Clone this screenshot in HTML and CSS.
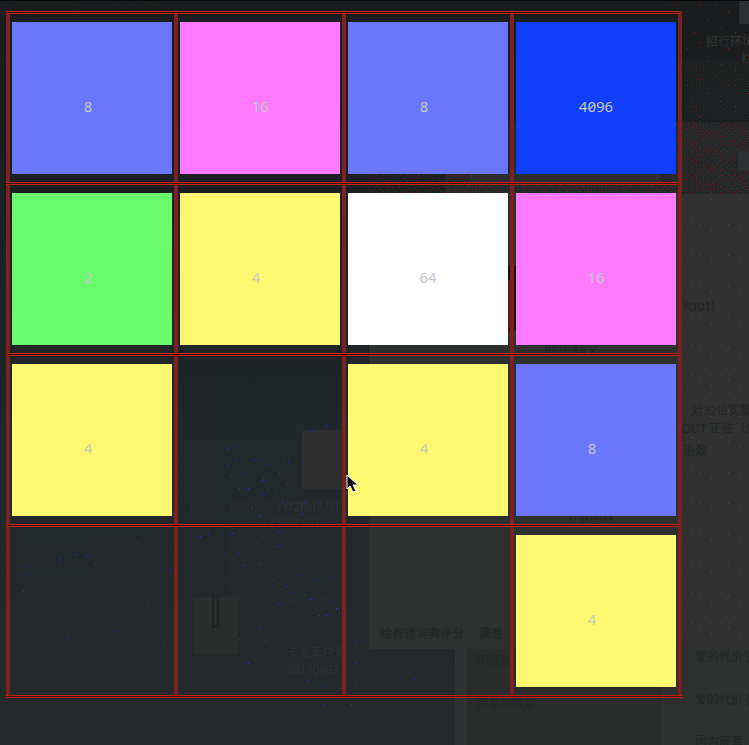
FILE: index.html
```
<!DOCTYPE html>
<html lang="zh-CN">
<head>
<meta charset="utf-8">
<meta name="viewport" content="width=device-width, initial-scale=1">
<title>2048</title>
<link rel="stylesheet" href="styles.css">
</head>
<body>
<svg class="backdrop" aria-hidden="true">
  <defs>
    <linearGradient id="base" x1="0" y1="0" x2="0" y2="745" gradientUnits="userSpaceOnUse">
      <stop offset="0" stop-color="#1b1c1d"/>
      <stop offset=".25" stop-color="#1c2022"/>
      <stop offset=".6" stop-color="#22272a"/>
      <stop offset="1" stop-color="#25292b"/>
    </linearGradient>
    <pattern id="grain" width="7" height="5" patternUnits="userSpaceOnUse">
      <path fill="#303030" d="M0 0h1v1H0zM3 1h1v1H3zM5 3h1v1H5zM1 3h1v1H1zM6 1h1v1H6zM3 4h1v1H3z"/>
    </pattern>
    <pattern id="red" width="23" height="17" patternUnits="userSpaceOnUse">
      <path fill="#741818" d="M1 1h1v1H1zM7 0h1v1H7zM12 2h1v1h-1zM18 1h1v1h-1zM4 4h1v1H4zM9 5h1v1H9zM15 4h1v1h-1zM21 5h1v1h-1zM2 8h1v1H2zM6 7h1v1H6zM13 8h1v1h-1zM19 9h1v1h-1zM4 11h1v1H4zM10 12h1v1h-1zM16 11h1v1h-1zM22 12h1v1h-1zM1 14h1v1H1zM8 15h1v1H8zM14 14h1v1h-1zM20 15h1v1h-1z"/>
    </pattern>
    <pattern id="redSparse" width="41" height="37" patternUnits="userSpaceOnUse">
      <path fill="#891c18" d="M3 5h1v1H3zM18 2h1v1h-1zM31 11h1v1h-1zM10 19h1v1h-1zM24 27h1v1h-1zM38 32h1v1h-1z"/>
    </pattern>
    <pattern id="greySparse" width="29" height="31" patternUnits="userSpaceOnUse">
      <path fill="#4a4c4c" d="M3 7h1v1H3zM15 13h1v1h-1zM25 3h1v1h-1zM9 27h1v1H9z"/>
    </pattern>
  </defs>
  <rect width="1600" height="1200" fill="url(#base)"/>
  <rect width="1600" height="1" fill="#000"/>

  <rect x="445" y="122" width="1155" height="72" fill="#242526"/>
  <rect x="445" y="122" width="1155" height="72" fill="url(#grain)"/>
  <rect x="369" y="174" width="313" height="20" fill="url(#red)"/>
  <rect x="672" y="122" width="928" height="72" fill="url(#red)"/>
  <rect x="672" y="1" width="928" height="121" fill="url(#redSparse)"/>
  <rect x="682" y="60" width="918" height="62" fill="url(#grain)" opacity=".6"/>
  <path fill="#2c2e2f" d="M739 1h30v23h-30zM738 151h30v20h-30z"/>

  <rect x="369" y="194" width="1231" height="455" fill="#2e2f2f"/>
  <rect x="470" y="174" width="190" height="8" fill="#2e2f2f"/>
  <rect x="682" y="194" width="918" height="451" fill="#303030"/>
  <rect x="682" y="194" width="918" height="451" fill="url(#greySparse)"/>
  <rect x="466" y="649" width="195" height="551" fill="#2a2b2b"/>
  <rect x="455" y="649" width="12" height="551" fill="#303131"/>
  <rect x="661" y="649" width="939" height="551" fill="#2e302f"/>
  <rect x="508" y="265" width="8" height="66" fill="#191212"/>
  <path fill="#681818" d="M508 280h3q6 24-3 54z"/>

  <rect x="228" y="500" width="114" height="130" fill="url(#grain)" opacity=".7"/>
  <rect x="98" y="540" width="65" height="60" fill="url(#grain)" opacity=".35"/>
  <rect x="302" y="430" width="42" height="59" rx="3" fill="#2e2d2d"/>
  <rect x="193" y="597" width="45" height="57" fill="#2b2c2c"/>
  <path fill="none" stroke="#202426" stroke-width="2" d="M213 597h5v30h-5z"/>

  <g class="ghost-dark">
    <text x="683" y="311" class="large">root)</text>
    <text x="544" y="354" class="large">网络释义</text>
    <text x="691" y="415">对32位实数</text>
    <text x="682" y="433">OUT 正弦（S</text>
    <text x="683" y="455">函数</text>
    <text x="566" y="521">分散函数</text>
    <text x="380" y="638">给有道词典评分</text>
    <text x="479" y="638">满意</text>
    <text x="476" y="666">小时候</text>
    <text x="476" y="708">简单的歌单</text>
    <text x="695" y="661">爱的代价 (</text>
    <text x="695" y="704">爱的代价 (</text>
    <text x="695" y="746">因为寂寞</text>
  </g>
  <g class="ghost-light">
    <text x="706" y="46">招行环境</text>
    <text x="741" y="63">栏</text>
    <text x="278" y="511">rW2RH8JM</text>
    <text x="270" y="527">FSPHX07</text>
    <text x="286" y="657">卡流库户号</text>
    <text x="286" y="674">20170907</text>
  </g>

  <path fill="#080909" d="M5 7h1v1H5zM13 8h1v1h-1zM22 4h1v1h-1zM36 6h1v1h-1zM54 5h1v1h-1zM72 7h1v1h-1zM105 3h1v1h-1zM119 7h1v1h-1zM131 7h1v1h-1zM144 4h1v1h-1zM156 7h1v1h-1zM26 15h1v1h-1zM35 16h1v1h-1zM76 15h1v1h-1zM94 17h1v1h-1zM124 14h1v1h-1zM1 33h1v1H1zM2 38h1v1H2zM0 45h1v1H0zM2 49h1v1H2zM1 58h1v1H1z"/>
  <path fill="#1539f0" d="M60 558h1v1h-1zM60 561h1v1h-1zM76 554h1v1h-1zM86 556h1v1h-1zM95 564h1v1h-1zM26 565h1v1h-1zM26 573h1v1h-1zM23 591h1v1h-1zM21 603h1v1h-1zM137 543h1v1h-1zM163 541h1v1h-1zM170 570h1v1h-1zM147 603h1v1h-1zM68 638h1v1h-1zM65 644h1v1h-1zM89 629h1v1h-1zM114 631h1v1h-1zM163 644h1v1h-1zM191 506h1v1h-1zM200 536h1v1h-1zM208 533h1v1h-1zM232 533h1v1h-1zM238 553h1v1h-1zM242 565h1v1h-1zM239 639h1v1h-1zM248 663h1v1h-1z
    M228 448h1v1h-1zM234 445h1v1h-1zM236 460h1v1h-1zM228 465h1v1h-1zM254 460h1v1h-1zM258 459h1v1h-1zM266 464h1v1h-1zM283 459h1v1h-1zM288 461h1v1h-1zM231 475h1v1h-1zM242 474h1v1h-1zM263 478h1v1h-1zM262 480h1v1h-1zM279 473h1v1h-1zM287 484h1v1h-1zM293 485h1v1h-1zM293 490h1v1h-1zM239 488h1v1h-1zM248 488h1v1h-1zM262 494h1v1h-1zM267 489h1v1h-1zM275 491h1v1h-1zM303 433h1v1h-1zM312 430h1v1h-1zM326 425h1v1h-1zM231 505h1v1h-1zM245 503h1v1h-1zM251 507h1v1h-1zM269 508h1v1h-1zM282 502h1v1h-1zM295 509h1v1h-1zM304 502h1v1h-1zM302 514h1v1h-1zM260 516h1v1h-1z
    M278 531h1v1h-1zM278 546h1v1h-1zM257 543h1v1h-1zM261 563h1v1h-1zM273 579h1v1h-1zM298 575h1v1h-1zM314 579h1v1h-1zM332 577h1v1h-1zM286 586h1v1h-1zM290 592h1v1h-1zM293 600h1v1h-1zM310 599h1v1h-1zM317 597h1v1h-1zM321 598h1v1h-1zM332 602h1v1h-1zM336 608h1v1h-1zM278 604h1v1h-1zM293 610h1v1h-1zM319 615h1v1h-1zM326 615h1v1h-1zM309 622h1v1h-1zM260 628h1v1h-1zM265 640h1v1h-1zM293 639h1v1h-1zM356 642h1v1h-1zM356 663h1v1h-1zM308 680h1v1h-1zM322 686h1v1h-1zM341 688h1v1h-1zM355 682h1v1h-1zM414 679h1v1h-1zM324 704h1v1h-1zM351 704h1v1h-1zM357 713h1v1h-1z"/>
</svg>

<main class="board">
  <div class="cell"><div class="tile v8 single">8</div></div>
  <div class="cell"><div class="tile v16">16</div></div>
  <div class="cell"><div class="tile v8 single">8</div></div>
  <div class="cell"><div class="tile v4096">4096</div></div>

  <div class="cell"><div class="tile v2 single">2</div></div>
  <div class="cell"><div class="tile v4 single">4</div></div>
  <div class="cell"><div class="tile v64">64</div></div>
  <div class="cell"><div class="tile v16">16</div></div>

  <div class="cell"><div class="tile v4 single">4</div></div>
  <div class="cell"></div>
  <div class="cell"><div class="tile v4 single">4</div></div>
  <div class="cell"><div class="tile v8 single">8</div></div>

  <div class="cell"></div>
  <div class="cell"></div>
  <div class="cell"></div>
  <div class="cell"><div class="tile v4 single">4</div></div>
</main>

<svg class="pointer" width="13" height="20" viewBox="0 0 13 20" aria-hidden="true">
  <path d="M1 1v14l3-3 3 6 3-1-3-6h5z" fill="#000" stroke="#fff" stroke-width="1"/>
</svg>
</body>
</html>
```
FILE: styles.css
```
*,
*::before,
*::after {
  box-sizing: border-box;
}

body {
  position: relative;
  min-height: 100vh;
  margin: 0;
  padding: 11px 67px 47px 6px;
  overflow: hidden;
  background: #25292b;
  color: #c8c8c8;
  font: 15px/19px "Noto Sans", "Noto Sans CJK SC", sans-serif;
  font-variant-numeric: slashed-zero;
}

.backdrop {
  position: absolute;
  top: 0;
  left: 0;
  width: 100%;
  height: 100%;
  overflow: hidden;
  font-family: "Noto Sans CJK SC", sans-serif;
  font-size: 12px;
  shape-rendering: crispEdges;
}

.backdrop .large {
  font-size: 14px;
}

.ghost-dark {
  fill: #212627;
}

.ghost-light {
  fill: #303131;
}

.board {
  position: relative;
  display: grid;
  grid-template-columns: repeat(4, 1fr);
  grid-auto-rows: 171px;
  padding-bottom: 3px;
  border-right: 4px solid #782322;
}

.cell {
  position: relative;
  display: grid;
  padding: 11px 2px 8px;
  border-left: 4px solid #782322;
}

/* Double rule along the top of each row and the foot of the board */
.cell::before,
.board::after {
  content: "";
  position: absolute;
  top: 0;
  left: -4px;
  right: 0;
  height: 3px;
  border: solid #c81e16;
  border-width: 1px 0;
  background: #2b1f1f;
}

.board::after {
  top: auto;
  bottom: 0;
  left: 0;
  right: -4px;
}

.tile {
  padding-top: 75px;
  text-align: center;
}

.single {
  padding-right: 8px;
}

.v2 { background: #68fb6e; }
.v4 { background: #fff972; }
.v8 { background: #6a76fb; }
.v16 { background: #ff7afc; }
.v64 { background: #fff; }
.v4096 { background: #103ffb; }

.pointer {
  position: absolute;
  top: 474px;
  left: 346px;
}
```
